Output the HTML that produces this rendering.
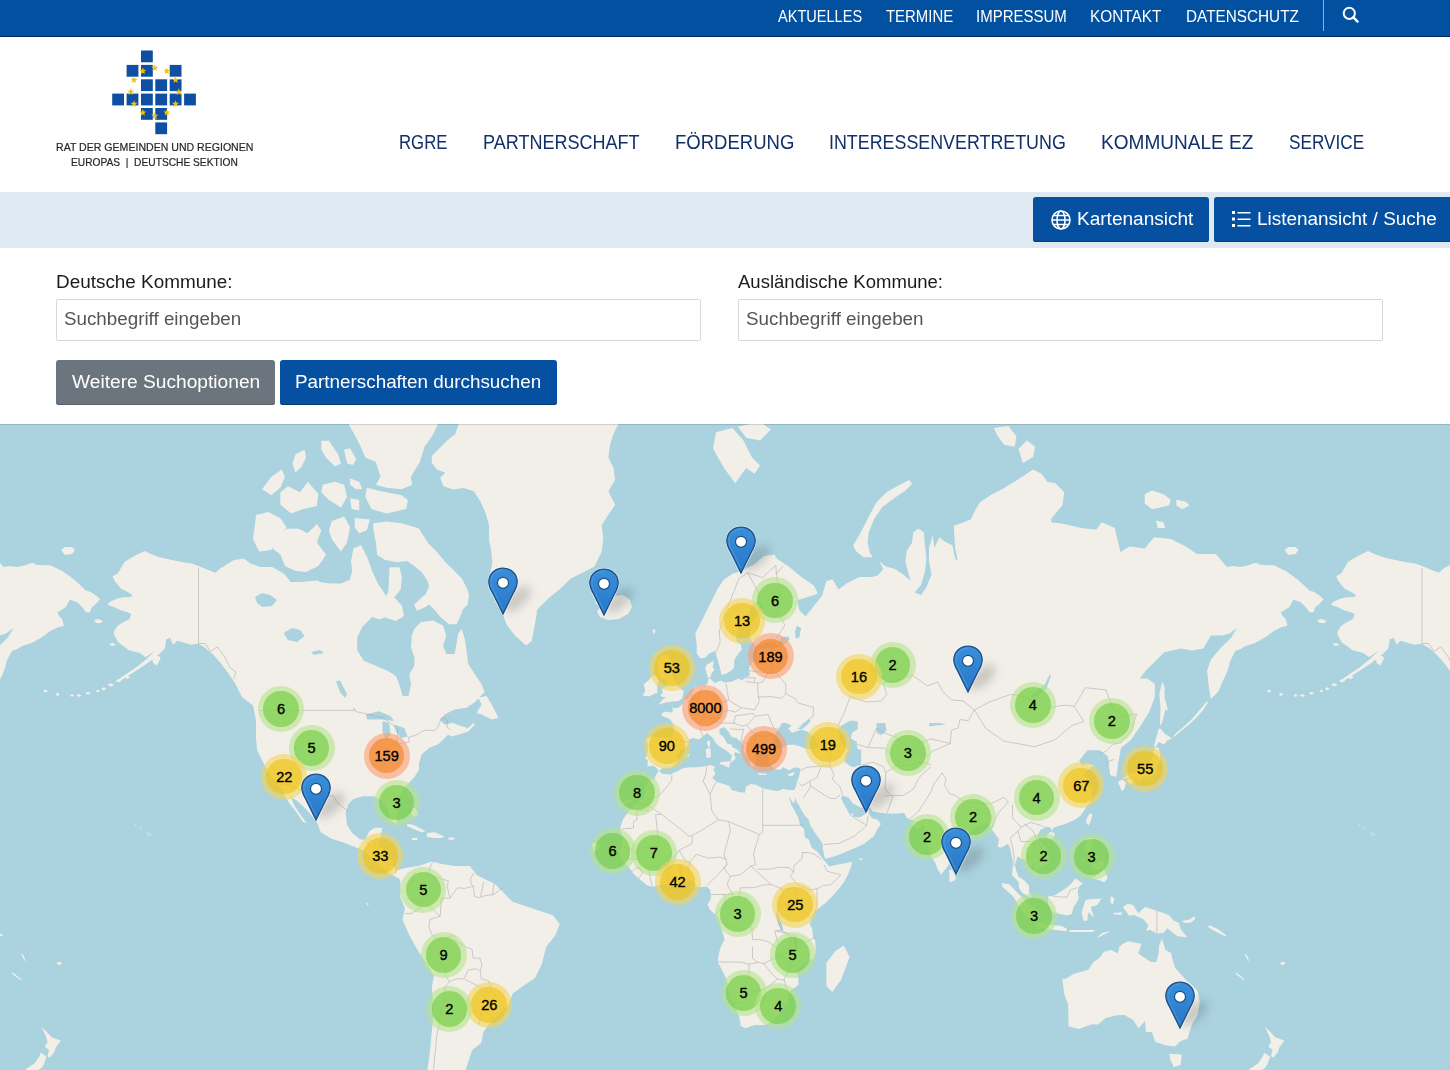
<!DOCTYPE html>
<html><head><meta charset="utf-8">
<style>
*{margin:0;padding:0;box-sizing:border-box}
html,body{width:1450px;height:1070px;overflow:hidden;background:#fff;font-family:"Liberation Sans",sans-serif}
.a{position:absolute;white-space:nowrap}
.t{position:absolute;white-space:nowrap;transform-origin:0 0}
#top{position:absolute;left:0;top:0;width:1450px;height:37px;background:#0151a0;border-bottom:1px solid #03245c}
.tn{color:#fff;font-size:15.6px}
.nav{color:#11306b;font-size:20.3px}
#band{position:absolute;left:0;top:192px;width:1450px;height:56px;background:#dee9f2}
.btn{position:absolute;background:#0650a2;border-radius:3px;box-shadow:inset 0 -1px 0 #0a3c78}
.bt{color:#fff;font-size:18.6px}
.lbl{color:#1b1b1b;font-size:18.3px}
.inp{position:absolute;border:1px solid #d5d8dc;background:#fff;border-radius:2px}
.ph{color:#51565c;font-size:17.6px}
#map{position:absolute;left:0;top:424px;width:1450px;height:646px;overflow:hidden}
.cl{position:absolute;width:46px;height:46px;border-radius:23px}
.cl div{position:absolute;left:5.2px;top:5.2px;width:35.6px;height:35.6px;border-radius:17.8px;font-size:14.6px;line-height:36px;-webkit-text-stroke:0.35px #000;text-align:center;color:#000;font-family:"Liberation Sans",sans-serif}
.pin{position:absolute}
.sh{position:absolute;width:34px;height:16px;border-radius:50%;background:rgba(40,40,40,0.2);filter:blur(5px);transform:rotate(-42deg)}
</style></head><body>
<div id="top"></div>
<div id="top"></div>
<span class="t tn" id="n1" style="left:778.0px;top:6.9px;font-size:16.06px;transform:scaleX(0.9065)">AKTUELLES</span>
<span class="t tn" id="n2" style="left:886.0px;top:6.9px;font-size:16.06px;transform:scaleX(0.9296)">TERMINE</span>
<span class="t tn" id="n3" style="left:976.1px;top:6.9px;font-size:16.06px;transform:scaleX(0.9343)">IMPRESSUM</span>
<span class="t tn" id="n4" style="left:1090.0px;top:6.9px;font-size:16.06px;transform:scaleX(0.9578)">KONTAKT</span>
<span class="t tn" id="n5" style="left:1186.0px;top:6.9px;font-size:16.06px;transform:scaleX(0.9542)">DATENSCHUTZ</span>
<div class="a" style="left:1323px;top:0;width:1px;height:31px;background:#8fb0d6"></div>
<svg class="a" style="left:1341px;top:5px" width="20" height="20" viewBox="0 0 20 20"><circle cx="8.3" cy="8.3" r="5.6" fill="none" stroke="#fff" stroke-width="2"/><path d="M12.4 12.4 L16.6 16.6" stroke="#fff" stroke-width="2.4" stroke-linecap="round"/></svg>
<!-- logo -->
<svg class="a" style="left:0;top:0" width="300" height="190" viewBox="0 0 300 190">
<g fill="#0e4ea3">
<rect x="141.0" y="50.5" width="11.8" height="11.8"/>
<rect x="126.6" y="64.9" width="11.8" height="11.8"/>
<rect x="141.0" y="64.9" width="11.8" height="11.8"/>
<rect x="169.7" y="64.9" width="11.8" height="11.8"/>
<rect x="141.0" y="79.3" width="11.8" height="11.8"/>
<rect x="155.3" y="79.3" width="11.8" height="11.8"/>
<rect x="169.7" y="79.3" width="11.8" height="11.8"/>
<rect x="112.2" y="93.6" width="11.8" height="11.8"/>
<rect x="126.6" y="93.6" width="11.8" height="11.8"/>
<rect x="141.0" y="93.6" width="11.8" height="11.8"/>
<rect x="155.3" y="93.6" width="11.8" height="11.8"/>
<rect x="169.7" y="93.6" width="11.8" height="11.8"/>
<rect x="184.1" y="93.6" width="11.8" height="11.8"/>
<rect x="141.0" y="108.0" width="11.8" height="11.8"/>
<rect x="155.3" y="108.0" width="11.8" height="11.8"/>
<rect x="155.3" y="122.4" width="11.8" height="11.8"/>
</g>
<g fill="#f3c300">
<polygon points="154.80,64.20 155.71,66.65 158.32,66.76 156.27,68.38 156.97,70.89 154.80,69.45 152.63,70.89 153.33,68.38 151.28,66.76 153.89,66.65"/>
<polygon points="166.80,67.42 167.71,69.86 170.32,69.97 168.27,71.59 168.97,74.11 166.80,72.67 164.63,74.11 165.33,71.59 163.28,69.97 165.89,69.86"/>
<polygon points="175.58,76.20 176.50,78.65 179.10,78.76 177.06,80.38 177.76,82.89 175.58,81.45 173.41,82.89 174.11,80.38 172.07,78.76 174.67,78.65"/>
<polygon points="178.80,88.20 179.71,90.65 182.32,90.76 180.27,92.38 180.97,94.89 178.80,93.45 176.63,94.89 177.33,92.38 175.28,90.76 177.89,90.65"/>
<polygon points="175.58,100.20 176.50,102.65 179.10,102.76 177.06,104.38 177.76,106.89 175.58,105.45 173.41,106.89 174.11,104.38 172.07,102.76 174.67,102.65"/>
<polygon points="166.80,108.98 167.71,111.43 170.32,111.54 168.27,113.16 168.97,115.68 166.80,114.23 164.63,115.68 165.33,113.16 163.28,111.54 165.89,111.43"/>
<polygon points="154.80,112.20 155.71,114.65 158.32,114.76 156.27,116.38 156.97,118.89 154.80,117.45 152.63,118.89 153.33,116.38 151.28,114.76 153.89,114.65"/>
<polygon points="142.80,108.98 143.71,111.43 146.32,111.54 144.27,113.16 144.97,115.68 142.80,114.23 140.63,115.68 141.33,113.16 139.28,111.54 141.89,111.43"/>
<polygon points="134.02,100.20 134.93,102.65 137.53,102.76 135.49,104.38 136.19,106.89 134.02,105.45 131.84,106.89 132.54,104.38 130.50,102.76 133.10,102.65"/>
<polygon points="130.80,88.20 131.71,90.65 134.32,90.76 132.27,92.38 132.97,94.89 130.80,93.45 128.63,94.89 129.33,92.38 127.28,90.76 129.89,90.65"/>
<polygon points="134.02,76.20 134.93,78.65 137.53,78.76 135.49,80.38 136.19,82.89 134.02,81.45 131.84,82.89 132.54,80.38 130.50,78.76 133.10,78.65"/>
<polygon points="142.80,67.42 143.71,69.86 146.32,69.97 144.27,71.59 144.97,74.11 142.80,72.67 140.63,74.11 141.33,71.59 139.28,69.97 141.89,69.86"/>
</g>
</svg>
<span class="t" id="l1" style="left:55.6px;top:140.5px;color:#262626;-webkit-text-stroke:0.2px #262626;font-size:11.17px;transform:scaleX(0.9470)">RAT DER GEMEINDEN UND REGIONEN</span>
<span class="t" id="l2" style="left:70.6px;top:155.9px;color:#262626;-webkit-text-stroke:0.2px #262626;font-size:11.31px;transform:scaleX(0.9030)">EUROPAS &nbsp;|&nbsp; DEUTSCHE SEKTION</span>
<span class="t nav" id="m1" style="left:398.6px;top:129.5px;font-size:20.67px;transform:scaleX(0.8115)">RGRE</span>
<span class="t nav" id="m2" style="left:483.1px;top:129.5px;font-size:20.67px;transform:scaleX(0.8726)">PARTNERSCHAFT</span>
<span class="t nav" id="m3" style="left:675.1px;top:131.4px;font-size:20.30px;transform:scaleX(0.9133)">FÖRDERUNG</span>
<span class="t nav" id="m4" style="left:829.1px;top:129.5px;font-size:20.67px;transform:scaleX(0.8644)">INTERESSENVERTRETUNG</span>
<span class="t nav" id="m5" style="left:1100.7px;top:129.5px;font-size:20.67px;transform:scaleX(0.9223)">KOMMUNALE EZ</span>
<span class="t nav" id="m6" style="left:1289.2px;top:129.5px;font-size:20.67px;transform:scaleX(0.8331)">SERVICE</span>
<div id="band"></div>
<div class="btn" style="left:1033px;top:197px;width:176px;height:45px"></div>
<div class="btn" style="left:1214px;top:197px;width:250px;height:45px"></div>
<svg class="a" style="left:1050px;top:209px" width="22" height="22" viewBox="0 0 22 22"><g fill="none" stroke="#fff" stroke-width="1.6"><circle cx="11" cy="11" r="9"/><ellipse cx="11" cy="11" rx="4" ry="9"/><path d="M2 11H20M3.5 6.5H18.5M3.5 15.5H18.5"/></g></svg>
<span class="t bt" id="b1" style="left:1076.6px;top:208.2px;font-size:18.99px;transform:scaleX(1.0026)">Kartenansicht</span>
<svg class="a" style="left:1231px;top:209px" width="22" height="22" viewBox="0 0 22 22"><g fill="#fff"><rect x="1" y="2" width="3" height="3"/><rect x="1" y="8.5" width="3" height="3"/><rect x="1" y="15" width="3" height="3"/><rect x="6.5" y="3" width="13" height="1.5"/><rect x="6.5" y="9.5" width="13" height="1.5"/><rect x="6.5" y="16" width="13" height="1.5"/></g></svg>
<span class="t bt" id="b2" style="left:1257.4px;top:208.2px;font-size:18.99px;transform:scaleX(0.9960)">Listenansicht / Suche</span>
<span class="t lbl" id="f1" style="left:55.7px;top:270.8px;font-size:18.58px;transform:scaleX(1.0174)">Deutsche Kommune:</span>
<span class="t lbl" id="f2" style="left:738.3px;top:270.8px;font-size:18.58px;transform:scaleX(0.9974)">Ausländische Kommune:</span>
<div class="inp" style="left:56px;top:298.5px;width:645px;height:42.5px"></div>
<div class="inp" style="left:737.5px;top:298.5px;width:645px;height:42.5px"></div>
<span class="t ph" id="p1" style="left:64.3px;top:309.2px;font-size:17.74px;transform:scaleX(1.0594)">Suchbegriff eingeben</span>
<span class="t ph" id="p2" style="left:745.5px;top:309.2px;font-size:17.74px;transform:scaleX(1.0612)">Suchbegriff eingeben</span>
<div class="btn" style="left:56px;top:360px;width:219px;height:45px;background:#6c757d;box-shadow:inset 0 -1px 0 #5a6168"></div>
<div class="btn" style="left:280px;top:360px;width:277px;height:45px"></div>
<span class="t bt" id="g1" style="left:72.1px;top:371.4px;font-size:19.27px;transform:scaleX(0.9947)">Weitere Suchoptionen</span>
<span class="t bt" id="g2" style="left:295.4px;top:371.4px;font-size:19.27px;transform:scaleX(0.9783)">Partnerschaften durchsuchen</span>
<div id="map"><svg class="a" style="left:0;top:0" width="1450" height="646" viewBox="0 0 1450 646">
<rect width="1450" height="646" fill="#aad3df"/>
<defs><g id="w"><path d="M94.0 196.0 98.0 195.0 103.0 197.0 101.0 199.0 96.0 199.0ZM109.0 220.0 113.0 219.0 116.0 221.0 112.0 222.0ZM107.6 180.8 109.3 178.2 116.0 174.9 122.8 173.2 129.5 173.2 132.9 171.5 127.8 168.1 121.1 164.8 114.4 156.4 112.7 152.2 117.7 149.6 124.5 137.9 132.9 132.8 144.6 126.9 151.4 130.3 158.1 132.8 168.2 135.3 181.6 137.9 191.7 139.5 198.5 142.1 206.9 145.4 215.3 148.8 220.2 144.6 233.6 136.2 243.7 134.5 250.5 139.6 260.5 143.0 272.3 143.0 284.1 149.7 290.8 158.1 300.9 158.1 317.7 156.4 320.0 158.1 329.9 159.4 341.1 159.4 349.8 155.7 352.3 147.0 351.0 137.0 353.5 124.6 361.0 120.9 367.2 133.3 372.1 147.0 378.3 160.6 382.1 165.6 385.8 171.8 388.3 168.1 389.5 143.2 399.4 143.2 401.9 153.2 400.7 165.6 394.5 173.0 392.0 180.5 387.0 185.4 385.8 192.9 379.6 195.4 372.1 192.9 367.2 197.9 362.2 203.1 357.2 213.2 357.2 226.6 363.9 236.7 375.7 241.8 387.5 246.8 395.9 251.9 399.2 260.3 402.6 272.0 408.5 272.0 411.0 260.3 409.3 250.2 414.4 241.8 414.4 233.4 411.0 223.3 411.8 211.5 414.4 204.8 421.1 198.0 432.9 196.4 443.0 201.4 446.3 211.5 443.0 221.6 446.3 230.0 454.7 230.0 456.4 219.9 458.1 209.8 461.5 204.8 464.8 214.9 466.5 226.6 468.2 240.1 474.9 250.2 481.6 260.3 484.5 268.0 475.0 278.0 466.5 283.8 454.7 285.5 444.6 290.5 439.6 295.6 444.6 300.6 453.0 299.0 461.5 302.3 468.2 304.0 473.2 299.0 474.9 300.6 468.2 307.4 458.1 310.7 451.4 312.4 448.0 310.7 443.0 315.8 438.6 319.9 429.4 323.8 421.6 330.4 419.0 339.5 419.0 346.1 413.7 353.9 408.5 359.2 403.3 365.7 399.3 372.3 398.0 378.8 397.5 388.0 396.7 399.7 391.5 397.1 387.6 386.6 382.3 376.2 373.2 372.3 362.7 372.3 353.5 374.9 348.3 380.1 345.7 389.3 347.0 401.0 352.2 408.9 360.1 415.4 365.3 415.4 369.2 407.6 374.5 403.7 382.3 403.7 381.0 410.2 378.0 421.0 385.0 429.0 392.0 438.0 395.4 445.5 399.3 449.4 403.3 452.0 398.0 454.0 392.0 451.0 386.0 447.0 378.0 440.0 370.0 432.0 364.0 426.7 353.7 422.6 343.4 418.5 331.1 414.4 320.8 408.2 316.7 398.0 312.0 392.0 305.0 384.0 296.0 376.0 291.0 373.0 294.0 381.0 300.0 390.0 305.0 397.0 307.0 399.0 303.0 398.0 297.0 389.0 290.0 380.0 284.0 371.0 281.7 365.0 269.4 350.6 263.2 338.3 257.0 325.9 256.0 313.6 256.0 297.1 253.1 281.5 242.1 273.2 235.2 259.4 229.7 251.2 221.4 240.1 213.1 230.5 204.8 223.6 197.9 219.4 191.0 220.8 177.2 216.7 173.1 220.8 170.3 213.9 166.2 215.3 164.8 224.5 159.3 230.0 148.3 238.8 134.5 247.8 121.0 256.5 118.5 255.5 124.0 251.5 136.0 243.5 146.5 235.0 155.5 226.5 145.5 233.2 140.0 229.1 129.0 226.3 117.9 218.1 113.8 209.8 114.4 206.8 117.7 201.8 122.8 198.4 129.5 195.0 131.2 190.0 127.8 188.3 121.1 186.6 114.4 183.3ZM478.3 273.7 486.7 272.0 493.4 283.8 498.5 293.9 491.7 295.6 481.6 290.5 476.6 288.9 481.6 280.5ZM407.2 399.7 413.7 401.0 421.6 405.0 425.5 407.6 421.6 408.2 413.7 405.0 407.2 402.3ZM426.8 408.9 434.7 408.2 443.8 412.2 442.5 414.1 433.3 414.1 426.8 412.8ZM412.0 414.0 417.0 414.0 417.6 416.0 412.0 416.0ZM448.4 413.5 454.3 413.5 454.3 415.7 448.4 415.7ZM395.9 446.4 405.0 444.0 418.3 441.9 431.8 437.4 440.8 439.7 454.2 441.9 469.9 441.9 476.7 450.9 485.6 455.4 494.6 459.8 503.6 468.8 512.6 477.8 526.0 482.3 539.5 486.8 553.0 491.3 559.7 500.2 555.2 511.5 546.2 522.7 541.7 540.6 535.0 554.1 521.5 563.1 512.6 569.8 508.1 581.0 499.1 590.0 490.1 599.0 483.4 607.9 481.2 619.1 472.2 625.9 465.5 646.0 465.0 676.0 427.0 676.0 427.3 646.0 429.6 630.4 431.8 607.9 434.0 585.5 431.8 563.1 434.0 551.8 427.3 540.6 418.3 527.2 409.4 511.5 402.6 495.7 404.9 484.5 400.4 473.3 400.4 457.6ZM373.2 99.2 386.7 97.5 401.8 99.2 418.6 104.3 428.4 119.4 436.8 127.8 445.2 137.9 453.6 146.3 462.0 154.7 467.1 164.8 469.0 170.5 467.7 180.5 462.8 185.4 459.0 195.4 456.5 200.3 449.1 200.3 440.4 192.9 434.2 185.4 429.2 180.5 423.0 184.2 416.8 186.7 414.3 180.5 419.3 175.5 425.5 170.5 429.2 161.9 426.8 155.7 421.8 148.2 414.3 142.0 406.9 137.0 397.0 138.3 384.5 135.8 377.1 130.8 375.9 118.4 373.4 106.0ZM385.0 176.0 395.0 174.0 402.0 182.0 404.0 192.0 396.0 197.0 386.0 194.0 382.0 184.0ZM458.7 -4.0 458.7 0.0 455.3 10.1 446.9 16.8 438.5 25.2 431.8 32.0 431.8 38.7 436.8 45.4 445.2 48.8 440.2 53.8 443.5 62.2 453.6 65.6 463.7 63.9 473.8 67.3 480.5 77.4 485.6 89.1 489.0 100.9 489.1 116.0 491.3 127.2 492.4 138.4 490.2 149.6 493.0 166.0 495.8 178.8 502.5 190.0 507.0 201.2 514.8 211.3 526.0 221.4 531.7 216.9 535.0 200.1 537.3 185.5 548.5 174.3 559.7 165.3 570.8 154.5 580.9 149.5 594.4 142.7 598.3 134.5 601.6 127.8 603.3 114.4 601.6 100.9 608.4 90.8 615.1 80.7 608.4 67.3 615.1 55.5 613.4 43.7 608.4 33.6 610.1 20.2 613.4 10.1 618.5 0.0 618.5 -4.0ZM595.0 179.0 600.0 173.0 609.0 174.0 615.0 172.0 623.0 171.0 630.0 176.0 632.0 183.0 628.0 190.0 619.0 195.0 608.0 196.0 600.0 193.0 597.0 187.0 601.0 183.0ZM152.4 233.0 157.0 230.5 160.7 234.0 157.0 241.5 153.0 239.0ZM348.6 -4.0 348.6 0.0 356.2 13.7 360.8 22.8 365.3 33.4 375.9 37.9 380.5 53.1 375.9 60.7 386.6 63.7 401.7 65.2 412.3 60.7 410.8 53.1 419.9 37.9 424.5 22.8 432.1 12.1 438.1 0.0 438.1 -4.0ZM366.8 63.7 379.0 66.8 401.7 71.3 407.8 75.9 406.3 85.0 386.6 89.5 371.4 85.0 365.3 72.8ZM344.1 25.8 350.1 24.3 356.2 34.9 353.2 41.0 347.1 39.4ZM321.3 16.7 328.9 16.7 338.0 30.3 341.0 39.4 335.0 42.5 325.9 33.4 321.3 25.8ZM295.5 30.3 304.6 25.8 306.1 33.4 301.6 42.5 295.5 48.5 292.5 39.4ZM262.1 65.2 271.2 53.1 281.9 45.5 284.9 53.1 280.3 63.7 271.2 71.3ZM280.3 68.3 287.9 62.2 300.1 68.3 307.7 57.7 318.3 69.8 316.8 81.9 303.1 85.0 291.0 89.5 280.3 80.4ZM322.8 60.7 335.0 57.7 344.1 60.7 347.1 72.8 341.0 83.4 328.9 75.9 321.3 68.3ZM350.1 54.6 359.2 57.7 362.3 65.2 356.2 65.2 350.1 60.7ZM350.1 74.3 359.2 75.9 359.2 86.5 351.7 85.0ZM256.1 91.0 268.2 88.0 280.3 94.1 286.4 103.2 280.3 113.8 271.2 125.9 259.1 127.4 253.0 115.3 254.6 103.2ZM277.3 115.3 286.4 104.7 298.5 104.7 307.7 109.2 316.8 100.1 321.3 106.2 316.8 118.3 325.9 130.5 322.8 136.0 318.0 142.0 306.0 148.0 295.5 147.0 285.0 142.0 280.3 130.5 272.8 124.4ZM331.9 97.1 344.1 92.6 350.1 103.2 347.1 118.3 341.0 127.4 331.9 115.3 328.9 106.2ZM354.7 94.1 369.9 95.6 366.8 106.2 359.2 109.2 354.7 103.2ZM658.7 346.7 655.9 343.3 652.6 341.6 647.5 342.5 647.8 336.0 645.4 334.7 647.5 328.6 648.1 322.7 647.5 318.1 646.1 315.4 650.5 312.6 657.3 313.0 664.8 313.5 671.6 314.0 673.6 308.3 673.6 300.5 670.2 295.6 667.5 294.1 662.7 292.6 661.4 289.5 665.8 287.5 670.9 288.5 672.9 288.5 672.3 283.3 674.0 284.3 678.4 283.8 683.1 279.6 683.8 275.9 688.6 274.2 691.3 270.9 693.7 265.9 694.7 263.1 699.8 262.0 704.9 261.4 707.3 259.7 708.3 256.2 706.9 250.3 705.2 244.2 706.9 240.5 713.7 236.7 712.7 243.6 714.7 245.4 711.7 249.1 710.3 253.2 711.7 256.2 715.1 259.1 720.2 256.8 725.3 258.5 732.1 257.4 738.9 254.4 741.3 256.8 745.3 253.8 749.8 251.5 749.1 244.2 751.1 239.2 754.5 236.7 757.6 240.5 760.6 239.8 759.9 232.8 757.6 230.9 757.2 226.9 761.6 224.9 766.1 224.3 772.9 224.9 780.3 222.2 776.3 220.2 771.2 218.1 764.4 219.5 755.9 222.2 750.8 216.0 750.1 207.5 750.8 198.7 755.9 193.3 761.0 186.3 764.0 183.8 761.0 178.1 755.9 178.1 750.8 182.2 749.1 188.6 745.7 195.6 740.6 200.2 737.2 205.3 736.5 211.1 736.2 216.7 740.6 220.2 741.9 225.6 738.9 228.9 734.5 235.4 733.8 244.2 731.4 246.6 726.3 249.7 721.5 250.9 720.5 246.0 718.1 237.3 715.8 228.9 713.4 226.3 712.7 228.3 710.0 228.9 704.9 234.1 700.1 234.1 696.7 229.6 696.8 221.6 695.3 209.6 699.8 200.6 705.8 188.7 711.7 176.7 717.7 164.8 723.7 155.8 732.7 149.8 741.6 146.8 753.6 140.8 764.1 131.9 774.5 130.4 776.6 134.5 789.0 142.8 801.4 153.1 813.8 161.4 817.9 169.7 805.5 173.8 797.2 175.9 799.3 186.2 805.5 192.4 813.8 182.1 822.1 171.7 826.2 157.3 832.4 155.2 838.6 165.5 846.9 159.3 859.3 153.1 871.7 153.1 877.9 151.5 883.2 145.0 879.3 137.1 885.8 142.4 895.0 145.0 902.8 150.2 910.7 156.7 908.0 147.6 905.4 137.1 906.7 126.7 912.0 118.8 913.3 108.3 918.5 104.4 923.7 108.3 925.0 121.4 926.4 134.5 925.0 147.6 921.1 160.7 914.6 168.5 921.1 171.1 926.4 163.3 931.6 150.2 929.0 137.1 929.0 124.0 932.9 111.0 934.2 124.0 939.4 113.6 944.7 117.5 952.5 121.4 955.1 134.5 957.8 137.1 955.1 124.0 953.8 101.8 964.3 97.9 970.8 95.3 977.4 82.2 980.0 78.2 991.7 70.4 1004.2 64.1 1020.7 53.8 1033.1 45.5 1041.4 49.7 1047.6 57.9 1055.0 59.0 1064.3 68.3 1062.4 81.4 1051.2 94.5 1051.2 98.2 1064.3 100.1 1081.1 103.9 1096.1 105.7 1101.7 98.2 1114.8 103.9 1120.4 128.1 1129.7 122.5 1144.7 124.4 1154.0 113.2 1170.8 115.1 1185.8 122.5 1197.0 130.0 1215.7 130.0 1226.9 142.9 1233.6 142.0 1240.3 142.9 1248.7 141.2 1252.9 139.5 1257.1 138.7 1258.8 140.4 1265.5 141.2 1274.0 141.2 1279.0 143.7 1285.7 147.1 1290.8 150.5 1297.5 155.5 1304.2 161.4 1309.3 166.5 1314.3 168.1 1319.4 171.5 1323.6 174.9 1319.4 179.9 1315.2 183.3 1313.5 188.3 1309.3 188.3 1305.9 183.3 1300.9 178.2 1295.8 176.5 1293.3 175.7 1291.6 179.1 1289.1 183.3 1284.0 186.6 1280.7 188.3 1282.4 191.7 1285.7 195.0 1287.4 201.8 1280.7 203.5 1274.0 206.8 1267.2 211.9 1258.8 216.9 1253.8 219.4 1245.4 222.0 1240.3 225.3 1235.3 227.0 1230.2 237.1 1228.5 243.8 1226.0 250.5 1223.5 255.6 1218.3 267.6 1210.8 275.1 1209.0 263.9 1207.1 247.0 1210.8 235.8 1220.2 224.6 1231.4 213.4 1237.0 204.0 1229.5 209.6 1222.1 211.5 1210.8 211.5 1203.4 224.6 1192.1 226.5 1180.9 224.6 1164.1 228.3 1154.8 237.7 1145.4 247.0 1139.8 254.5 1147.3 254.5 1154.8 260.1 1154.8 273.2 1149.2 288.1 1139.8 303.1 1130.5 316.2 1121.1 323.7 1118.3 338.6 1116.3 353.0 1110.1 351.0 1108.0 332.4 1099.8 326.3 1087.5 326.3 1079.2 336.6 1082.1 341.6 1087.9 339.9 1094.0 341.2 1087.2 346.7 1082.8 350.9 1086.6 353.8 1088.3 360.7 1092.0 364.3 1092.0 367.9 1090.3 369.9 1092.3 371.8 1090.6 377.7 1086.6 381.9 1084.2 386.4 1080.4 391.7 1075.3 395.4 1068.5 398.4 1063.4 400.6 1058.3 402.1 1052.9 403.9 1051.9 407.5 1050.5 403.2 1046.4 402.8 1040.3 406.1 1037.3 412.2 1040.0 417.6 1045.4 422.5 1048.8 430.6 1048.8 438.3 1044.8 440.7 1040.3 442.5 1034.6 448.7 1033.9 442.8 1029.5 442.1 1025.4 436.2 1020.6 434.5 1017.9 432.0 1014.8 440.7 1016.2 446.6 1018.9 453.5 1022.0 454.5 1025.0 457.2 1029.1 461.7 1029.1 468.5 1031.8 473.2 1029.5 473.6 1022.0 468.5 1018.9 463.7 1018.6 457.9 1011.8 450.7 1012.8 443.8 1012.5 435.2 1009.7 422.9 1008.0 419.7 1001.6 423.6 997.8 422.9 998.9 415.1 995.5 410.4 991.1 404.6 989.7 399.5 985.3 401.3 980.2 402.4 973.4 403.2 972.7 406.8 966.6 410.8 957.4 419.4 950.6 424.7 950.3 432.4 948.9 440.4 947.2 442.8 943.5 447.6 941.1 450.4 937.7 445.6 935.3 438.7 931.9 433.8 929.2 426.4 926.5 417.6 925.1 412.2 925.1 405.0 924.4 400.6 916.6 405.0 912.2 400.2 916.3 398.0 910.2 395.4 906.8 393.9 904.4 389.1 896.9 389.5 887.1 389.5 879.6 388.7 872.4 387.2 869.7 382.3 863.9 384.5 859.5 383.0 852.7 379.2 848.7 373.8 842.9 371.4 840.8 373.4 843.9 380.3 846.6 384.5 848.3 388.3 850.3 391.0 853.1 389.1 853.1 392.8 859.5 393.6 864.6 390.6 868.7 385.7 869.0 390.6 872.1 394.3 877.5 395.8 880.9 399.9 876.5 406.8 873.8 412.2 870.1 415.1 864.6 419.4 855.1 424.0 845.9 427.8 840.8 429.9 833.0 432.7 825.5 434.8 824.5 432.4 822.8 424.7 822.8 420.1 818.7 414.0 813.6 406.8 810.6 402.1 808.5 395.4 805.1 391.7 802.1 387.6 798.4 380.0 796.7 378.4 795.3 373.0 794.3 379.6 791.9 377.3 788.5 371.4 791.6 381.5 794.6 386.4 798.4 393.9 800.1 401.3 804.1 405.0 804.8 413.3 808.9 415.8 811.6 423.6 817.7 428.2 821.8 433.4 824.9 437.3 829.3 442.5 835.7 441.1 842.5 439.7 847.6 438.7 852.0 437.6 851.4 441.8 850.7 443.8 848.0 450.4 844.2 457.6 840.5 462.7 834.0 470.5 825.5 479.0 819.4 483.8 814.3 487.5 811.3 494.0 809.6 499.8 812.3 505.3 813.0 512.2 815.3 517.3 815.7 527.8 813.6 534.2 803.4 539.5 796.7 547.4 798.4 554.7 798.4 560.9 789.9 566.9 788.5 571.5 787.8 579.1 784.1 583.0 780.3 588.9 774.2 595.3 767.8 599.8 764.4 601.0 754.2 601.0 745.7 604.3 740.6 601.8 740.2 596.9 738.5 590.9 733.8 579.5 729.4 573.4 727.0 556.5 723.6 549.2 717.8 537.7 718.5 531.3 720.5 523.6 724.6 515.6 722.6 508.7 719.5 498.4 718.1 493.3 710.0 485.8 707.6 480.7 711.0 474.6 710.3 466.1 706.9 462.7 701.5 463.0 697.4 463.4 693.0 456.5 686.2 456.5 681.1 457.9 672.6 461.0 665.8 460.6 660.7 460.6 652.2 463.0 647.1 461.3 638.6 454.5 633.5 449.7 630.8 445.6 626.7 441.1 620.9 435.5 620.6 431.7 618.2 427.5 621.6 422.9 623.0 415.1 621.6 410.4 619.6 405.0 623.3 394.7 627.4 389.1 631.8 384.2 636.9 378.4 643.0 374.2 645.1 369.5 644.4 363.9 648.8 357.9 654.6 354.6 657.3 348.4 659.3 347.1 662.4 350.0 670.2 350.5 677.7 347.1 682.8 344.2 689.6 343.3 696.4 343.3 704.2 342.5 711.0 341.2 715.1 342.5 713.4 345.4 715.4 350.0 712.4 353.8 716.8 358.3 721.9 359.5 729.7 361.9 731.4 365.9 738.9 367.9 745.0 368.7 746.0 362.7 750.8 359.9 755.9 360.7 762.7 364.3 771.2 366.3 778.0 367.1 783.1 364.7 787.5 365.9 794.3 365.9 796.0 362.3 796.7 358.7 798.7 353.4 799.7 348.8 800.7 344.2 798.4 344.2 795.0 343.3 789.2 346.3 783.1 343.3 780.7 345.4 777.3 345.4 772.9 343.7 770.5 341.2 767.8 336.9 768.8 332.5 766.4 329.4 768.1 327.7 766.1 325.9 761.0 325.4 758.2 328.1 754.8 327.2 754.5 331.7 756.5 336.9 755.2 340.3 751.4 343.3 749.8 339.1 750.1 336.5 746.4 331.2 743.6 327.2 744.0 321.8 740.6 318.1 736.5 314.0 731.7 313.0 728.7 308.3 726.3 304.9 723.9 303.0 719.5 304.9 719.5 309.7 723.9 313.5 727.0 319.5 732.4 320.9 731.7 322.7 737.2 325.4 740.6 329.0 738.5 329.4 735.5 327.7 733.8 330.8 735.8 333.8 733.8 336.5 731.1 338.6 731.1 335.6 732.1 331.7 728.7 328.6 725.6 325.9 718.5 321.8 715.1 318.1 712.4 313.5 707.3 309.2 703.2 312.1 698.8 315.4 693.0 314.0 688.6 315.8 688.6 320.9 684.5 324.1 680.4 326.3 676.7 331.7 678.4 335.2 675.3 339.9 670.6 343.7 662.7 343.7 659.7 346.3ZM658.3 280.7 667.5 278.0 678.4 276.9 682.5 274.2 683.5 267.1 678.4 262.5 673.6 255.6 672.3 249.7 668.9 245.4 671.6 237.3 667.5 230.9 660.7 230.9 656.6 237.9 658.7 247.2 660.7 254.4 666.8 254.4 667.5 262.5 662.1 263.7 662.7 269.3 660.0 272.0 666.5 273.7 663.4 274.8ZM657.3 269.3 657.3 262.0 659.0 256.2 656.6 252.1 652.2 251.5 648.8 256.2 643.7 260.2 645.4 267.1 642.7 271.5 648.8 272.6 655.6 269.3ZM715.9 8.3 732.4 4.1 743.4 16.6 751.7 33.1 760.0 41.4 754.5 49.7 746.2 44.1 735.2 59.3 724.1 44.1 713.1 24.8ZM737.9 2.8 760.0 -2.0 771.0 5.5 760.0 16.6 746.2 13.8ZM853.1 121.4 860.9 108.3 868.8 92.6 876.6 78.2 887.1 67.8 898.9 61.2 909.3 56.0 912.0 59.9 905.4 66.5 892.3 75.6 881.9 83.5 874.0 95.3 868.8 108.3 867.5 118.8 870.1 129.3 872.7 133.2 863.6 133.2 855.7 126.7ZM993.8 4.1 1008.3 2.1 1016.6 12.4 1014.5 22.8 1004.2 20.7 997.9 12.4ZM1018.6 24.8 1026.9 16.6 1035.2 22.8 1033.1 33.1 1022.8 39.3ZM1144.7 70.2 1152.1 66.5 1163.4 70.2 1170.8 75.8 1169.0 81.4 1152.1 85.2 1144.7 79.6ZM1176.4 75.8 1185.8 77.7 1189.5 81.4 1182.1 85.2 1176.4 81.4ZM1155.9 96.4 1163.4 98.2 1165.2 103.9 1157.8 103.9ZM1284.5 126.0 1288.5 123.0 1295.5 123.0 1298.5 126.0 1295.5 130.0 1288.5 131.0ZM1160.0 301.5 1162.0 299.1 1165.4 285.4 1168.1 286.4 1164.4 273.1 1164.7 263.7 1162.3 257.4 1159.3 270.4 1160.6 283.8 1160.0 296.6ZM1153.5 322.7 1155.2 317.7 1158.6 304.9 1160.3 304.4 1165.4 310.2 1172.2 314.4 1167.1 316.3 1164.4 320.4 1158.6 318.1 1156.6 321.8ZM1122.6 355.0 1129.7 348.8 1137.2 348.0 1139.9 343.3 1143.3 342.5 1148.4 339.1 1153.2 331.7 1153.5 327.2 1154.5 323.6 1158.6 323.6 1160.0 329.4 1160.0 336.0 1156.9 342.5 1156.2 347.5 1152.8 351.3 1150.1 352.5 1143.3 352.5 1139.9 357.0 1136.9 354.2 1133.1 353.8 1128.0 354.2ZM1126.3 355.8 1131.4 353.8 1135.2 354.2 1134.8 357.9 1129.7 359.9ZM1118.8 357.0 1122.6 355.4 1126.0 359.1 1123.9 365.5 1121.6 367.1 1120.2 363.1 1118.2 359.1ZM1085.9 397.6 1087.9 392.1 1091.0 389.1 1092.3 391.0 1090.6 397.6 1088.3 401.7ZM1046.8 411.5 1049.8 408.2 1053.9 408.6 1054.9 410.4 1052.6 414.4 1048.1 414.7ZM949.2 457.6 949.6 452.4 948.9 446.6 951.3 445.2 954.0 449.0 956.0 454.2 953.7 456.9 950.6 457.9ZM1085.5 422.2 1087.6 414.0 1093.0 414.0 1092.3 419.4 1091.0 424.7 1094.0 429.2 1099.1 433.4 1097.4 434.8 1088.9 431.0 1087.6 428.2 1084.9 424.7ZM1092.3 437.6 1095.7 440.4 1100.8 435.2 1104.2 438.7 1102.5 443.8 1097.4 445.6 1094.0 445.6 1092.0 442.1ZM1092.3 454.2 1097.4 450.7 1104.2 444.9 1107.6 454.2 1104.2 458.3 1099.1 455.9 1092.3 454.5ZM1001.6 458.9 1009.1 460.3 1018.9 470.2 1029.8 480.7 1038.0 488.2 1037.6 497.7 1033.2 498.1 1025.7 491.9 1020.3 484.1 1012.8 471.9 1002.3 462.7ZM1035.2 501.2 1039.7 498.4 1046.4 499.8 1053.2 501.5 1060.0 501.5 1066.8 504.6 1066.5 507.3 1054.9 506.0 1044.8 504.6 1038.0 503.2ZM1068.5 506.0 1082.1 506.0 1092.3 506.0 1095.7 506.3 1092.3 508.0 1082.1 508.0 1070.2 508.0ZM1097.4 513.2 1102.5 508.7 1110.0 507.0 1105.9 509.7 1099.1 512.9ZM1050.2 471.2 1054.9 471.2 1061.7 467.1 1070.2 461.0 1075.3 454.5 1082.8 459.6 1078.7 463.0 1077.7 467.8 1078.7 474.6 1077.0 478.0 1073.6 483.1 1071.9 489.9 1066.8 491.6 1056.6 489.2 1052.2 487.9 1048.1 479.7 1048.1 472.9ZM1083.5 496.7 1087.2 496.7 1088.3 488.2 1094.0 493.3 1090.6 483.1 1097.4 481.1 1102.5 472.6 1100.8 474.6 1088.9 475.3 1085.5 476.3 1083.8 481.4 1081.5 488.2ZM1111.0 471.9 1114.4 474.6 1112.7 480.7 1110.3 478.0ZM1112.7 488.9 1122.2 488.2 1121.2 490.9 1113.7 490.2ZM1122.9 483.1 1128.0 479.7 1133.1 481.1 1138.2 489.2 1145.0 483.1 1156.9 486.8 1168.8 490.9 1173.9 496.7 1179.0 499.1 1180.7 505.3 1187.5 513.2 1177.3 512.2 1167.1 504.2 1163.7 508.7 1156.9 509.4 1150.1 506.0 1146.0 506.7 1148.4 501.2 1143.3 495.0 1133.8 490.9 1129.0 491.6 1126.3 487.5ZM1182.4 496.7 1189.2 495.7 1194.3 492.3 1195.3 495.0 1190.9 498.4 1184.1 499.1ZM1209.6 501.2 1218.1 505.3 1226.6 511.5 1224.9 512.2 1216.4 508.0 1207.9 502.9ZM1062.4 554.7 1064.1 569.6 1068.2 581.1 1068.5 599.0 1068.5 602.2 1078.7 605.1 1092.0 600.2 1097.8 600.6 1105.9 594.1 1116.1 591.3 1124.6 590.9 1133.1 596.1 1138.6 604.3 1145.0 596.9 1146.0 608.0 1151.8 608.0 1155.2 617.8 1165.4 621.3 1174.9 622.6 1180.7 616.9 1187.5 614.8 1191.9 600.2 1197.7 590.9 1199.7 578.0 1197.7 566.9 1190.9 560.2 1185.8 555.8 1174.9 543.8 1171.9 533.1 1171.2 528.9 1165.4 526.1 1162.0 514.6 1158.9 522.2 1158.6 529.6 1156.2 538.1 1151.1 538.1 1143.3 533.1 1138.2 529.6 1141.6 519.8 1136.5 519.1 1128.4 517.3 1122.9 519.8 1119.5 522.6 1117.8 529.2 1111.0 526.1 1104.2 527.8 1099.1 534.2 1093.0 538.4 1088.9 545.6 1078.7 548.5 1073.6 549.9 1065.8 554.7ZM1169.1 629.7 1181.7 630.6 1180.7 641.1 1173.9 643.0 1170.5 636.5ZM1264.6 602.6 1270.8 608.5 1275.5 613.5 1284.4 616.5 1279.3 623.5 1277.6 628.8 1273.1 633.7 1271.1 631.9 1272.5 625.7 1268.4 623.0 1271.1 617.8 1269.1 611.4ZM1264.3 628.8 1270.1 632.4 1267.4 640.2 1265.0 643.9 1259.5 647.2 1257.8 654.0 1253.1 657.4 1243.6 654.5 1244.6 650.6 1249.7 644.9 1258.2 639.2 1262.3 633.3ZM1280.3 538.4 1284.4 537.7 1284.7 540.9 1280.6 540.6ZM1235.1 548.1 1238.5 550.3 1245.3 555.8 1243.6 555.8 1236.1 550.3ZM1244.6 529.6 1247.0 531.3 1249.7 538.4 1245.9 533.1ZM843.8 521.5 849.6 533.1 840.9 556.3 832.2 567.9 826.4 562.1 826.4 538.9 835.1 527.3ZM787.5 350.9 789.9 349.2 795.3 348.0 793.3 351.3 789.9 352.5ZM757.6 349.6 767.1 349.6 766.1 350.9 759.3 350.9ZM719.8 338.2 730.7 336.9 729.0 343.7 720.2 339.9ZM705.6 325.0 710.3 324.1 711.0 333.0 706.6 334.3ZM706.9 318.1 710.0 315.8 710.0 322.7 708.3 323.2ZM595.0 179.0 600.0 173.0 609.0 174.0 615.0 172.0 623.0 171.0 630.0 176.0 632.0 183.0 628.0 190.0 619.0 195.0 608.0 196.0 600.0 193.0 597.0 187.0 601.0 183.0ZM147.5 412.2 150.9 410.4 148.2 407.9ZM123.7 253.2 127.1 251.6 130.5 253.2 127.1 254.9ZM115.6 256.8 118.6 255.1 121.7 256.8 118.6 258.4ZM107.4 260.8 110.8 259.2 114.2 260.8 110.8 262.4ZM101.3 264.8 103.7 263.2 106.1 264.8 103.7 266.4ZM95.9 267.1 97.9 265.5 99.9 267.1 97.9 268.6ZM85.3 269.3 88.0 267.7 90.8 269.3 88.0 270.8ZM76.1 271.5 78.9 269.9 81.6 271.5 78.9 273.0ZM70.0 271.5 72.1 269.9 74.1 271.5 72.1 273.0ZM55.1 270.4 57.5 268.8 59.8 270.4 57.5 271.9ZM42.8 267.1 45.6 265.5 48.3 267.1 45.6 268.6ZM1173.9 313.0 1180.7 307.3 1189.2 300.5 1196.0 294.1 1202.8 286.4 1207.9 278.5 1207.2 276.9 1201.1 284.3 1194.3 292.6 1187.5 299.6 1179.0 306.4 1173.2 312.1ZM410.9 383.4 416.0 384.5 417.7 390.2 413.3 393.2 411.6 389.5ZM623.3 376.9 631.8 375.7 630.5 378.8 624.7 379.6ZM591.7 419.0 600.6 420.4 597.8 426.8 593.8 426.4ZM858.8 434.5 862.9 434.8 861.6 435.9 859.5 435.9ZM147.9 407.5 151.6 410.4 148.5 412.6 147.2 409.7ZM139.7 402.8 142.1 403.9 140.4 404.2ZM134.6 400.6 136.3 400.6 135.6 401.7ZM468.7 681.2 480.6 681.8 478.9 687.3 470.4 685.6ZM652.2 205.3 655.6 206.1 654.2 210.4ZM685.5 331.2 689.6 330.3 688.6 332.5ZM810.9 497.4 811.9 499.8 810.9 499.5ZM366.0 478.7 369.1 479.7 367.7 481.4Z" fill="#f2efe9"/><path d="M365.6 290.5 379.0 287.2 390.8 292.2 394.2 297.3 384.1 295.6 374.0 295.6 367.3 295.6ZM382.4 297.3 389.1 299.0 390.8 310.7 385.8 315.8 382.4 307.4ZM394.2 300.6 404.3 304.0 407.6 312.4 400.9 314.1 395.9 307.4ZM255.0 173.0 262.0 169.0 270.0 171.0 277.0 176.0 272.0 182.0 262.0 183.0 257.0 179.0ZM283.6 209.0 292.0 204.0 300.0 206.0 304.6 212.0 297.0 218.0 288.0 216.0ZM336.0 257.0 340.0 256.5 347.0 270.0 345.0 274.0 340.0 268.0ZM311.0 228.0 320.0 226.0 324.0 229.0 314.0 231.0ZM772.9 322.3 774.9 315.8 774.9 309.7 778.3 305.4 782.0 299.1 785.8 299.1 791.6 301.5 788.2 304.4 791.9 308.8 796.7 307.3 801.7 305.4 806.8 307.3 811.9 311.1 818.7 320.4 819.1 322.7 813.6 325.4 805.1 324.5 798.4 321.8 793.3 320.4 786.5 321.3 781.4 324.1 776.6 324.1ZM796.7 304.9 798.4 304.4 803.4 299.1 808.5 295.6 810.9 296.6 806.8 301.5 802.1 304.9ZM838.5 303.5 845.9 299.1 851.0 296.6 857.8 297.6 857.8 304.9 852.0 308.8 851.0 314.4 856.8 318.1 857.5 325.0 861.2 325.9 861.2 333.8 860.9 341.2 852.7 343.3 848.3 340.8 844.2 337.3 845.9 328.6 848.7 327.2 843.9 321.3 839.1 315.8 839.1 308.8 836.8 306.4ZM876.5 299.1 885.0 299.1 886.7 306.4 881.6 311.1 876.5 308.8ZM929.2 299.1 939.4 299.1 946.2 300.5 936.0 301.5 929.2 302.5ZM1030.5 272.0 1036.3 267.6 1044.8 260.2 1049.8 250.3 1050.9 252.1 1046.4 264.8 1039.7 270.4 1032.9 273.7ZM785.8 479.0 791.6 476.6 793.9 479.0 793.3 482.1 790.5 486.5 785.8 484.8ZM776.9 489.2 778.3 489.6 781.0 496.7 783.4 506.3 781.7 507.0 778.0 499.5 776.6 493.3ZM793.3 510.4 795.0 510.8 797.3 519.1 797.7 526.8 795.6 526.1 794.3 518.4ZM780.3 221.6 784.8 220.2 789.9 214.7 788.2 212.5 781.4 213.2 779.0 217.4ZM795.6 214.7 799.4 213.2 801.1 203.9 796.7 201.7 795.0 207.5ZM439.8 530.6 442.5 531.7 444.6 534.2 441.8 533.1ZM294.3 322.3 296.4 322.7 297.1 325.4 294.7 325.0Z" fill="#aad3df"/><path d="M259.0 286.4 354.2 286.4 354.2 284.3 355.5 287.5 365.0 289.5 373.2 291.6 382.0 293.6 390.5 299.1 397.7 304.9 397.3 315.8 395.6 320.4 409.2 318.1 408.5 313.5 418.0 310.2 423.8 306.4 434.7 306.4 437.4 304.4 439.8 298.1 442.5 294.3 445.9 294.8 447.3 296.1 447.3 303.0 450.0 305.9M198.5 144.0 198.5 219.5 205.3 219.5 210.4 227.6 217.2 222.9 224.3 232.2 229.8 243.6 235.9 247.8 233.8 255.0M279.7 361.1 287.9 360.3 300.1 365.9 310.0 365.9 310.0 363.9 315.7 363.9 321.9 369.9 326.3 374.9 329.7 371.8 333.1 371.8 336.8 377.7 339.5 380.7 347.7 386.8M364.3 428.2 364.3 425.4 368.4 422.5 370.5 422.5 367.1 418.3 374.5 416.5 377.6 414.0M374.5 416.5 374.5 423.3 377.9 424.0M371.5 431.0 374.2 428.5 379.6 430.6M381.0 433.8 388.8 429.9 394.9 426.4M386.4 440.0 393.2 440.7M395.6 449.7 396.0 445.2M414.6 448.3 413.3 453.5M433.0 437.6 431.3 440.4 428.9 446.6 431.6 452.8 439.5 454.2 448.3 456.9 447.3 462.7 449.0 470.5 450.3 473.9M473.8 449.0 470.4 455.2 471.4 460.3 473.4 462.3M483.6 457.9 480.6 472.6M494.2 458.6 492.5 470.2M502.3 463.7 494.2 470.5 485.7 471.5 478.9 473.6 474.5 472.6 473.4 462.3 464.3 464.4 457.5 463.7 450.3 473.9 441.5 474.3 440.1 492.3 429.9 495.4 428.9 502.9 431.6 510.4 437.8 515.6 441.2 515.3 453.4 511.5 455.8 517.3 465.3 522.6 472.1 525.4 473.1 534.2 479.9 534.2 481.9 540.9 480.2 548.1 481.3 555.0 488.7 556.9 492.1 568.1 495.5 570.3 494.9 574.1 488.1 578.3 481.9 585.7 487.4 588.1 496.2 599.8M409.2 473.9 415.0 476.6 422.1 478.3 421.1 483.4 411.2 489.6 404.8 489.6M422.1 478.3 428.2 481.4 440.1 492.3M444.2 520.8 441.5 531.0 442.9 535.6 441.2 538.8 438.4 541.3M441.2 538.8 445.2 545.2 445.9 552.8 449.3 557.6 455.8 555.0 464.3 554.7 468.0 546.0 476.8 544.9 479.9 546.7M464.9 555.4 480.6 563.2 481.9 567.7 492.1 568.1M449.3 557.6 444.9 563.2 444.9 574.9 440.8 586.9 439.8 598.5 436.7 611.4 435.7 624.3 433.7 642.5 434.4 656.9 431.3 667.0 428.6 677.5 433.0 682.9 444.9 687.3M479.2 600.6 480.2 592.9 481.9 585.7M671.9 350.9 671.6 356.6 665.5 364.3 659.7 371.0 648.1 376.1 648.1 380.0 632.8 380.0M648.1 381.5 661.4 390.2 655.6 390.6 659.0 421.5 638.3 425.0 636.2 427.8 621.6 422.2M619.6 405.3 633.5 403.9 633.5 397.6 636.9 395.8 636.9 386.4 648.1 386.4 648.1 381.5M706.9 342.9 705.6 350.9 703.2 357.0 710.0 370.3 711.7 386.4 718.1 395.8 703.2 405.3 692.3 411.5 688.9 412.2 681.8 406.1 661.4 390.2M715.8 358.3 710.0 370.3M762.7 364.7 762.7 408.6 759.3 410.4 728.7 397.6 718.1 395.8M762.7 401.3 803.1 401.3M759.3 410.4 753.5 429.6 755.5 440.7 750.8 442.1 740.6 450.7 730.4 452.4 723.6 443.8 727.0 440.4 726.0 435.2 723.9 431.0 730.4 406.1 728.7 397.6M692.3 411.5 692.0 419.7 679.1 426.4 667.8 440.7 659.0 442.5 649.5 442.8 639.0 435.5 638.3 425.0M679.1 426.4 685.9 437.3 689.9 438.0 696.4 430.3 708.3 434.1 720.2 433.1 726.0 435.2M686.9 456.2 689.9 438.0M683.1 456.9 680.8 440.4M681.8 457.2 679.4 440.4M666.8 460.6 667.8 440.7M652.2 463.0 649.8 452.4 649.5 442.8M638.6 454.5 642.7 449.0 639.6 443.8M632.5 447.3 635.9 444.2 639.6 443.8M620.9 435.5 632.5 434.5 639.0 435.5M727.0 440.4 719.2 449.3 706.9 461.7M711.0 470.5 722.9 470.5 732.8 470.5 727.0 460.6 730.4 452.4M715.4 491.3 720.2 484.8 726.3 484.8 725.3 473.2 722.9 470.5M719.8 495.0 728.7 492.6 732.8 484.8 737.9 479.7 739.2 469.5 740.9 463.7 754.2 463.7 762.7 461.0 771.2 460.6 783.1 465.4 793.3 463.7M750.8 442.1 757.6 448.3 771.2 460.6M757.2 445.2 769.5 445.2 779.7 443.1 789.9 443.8 793.3 448.3M803.1 428.9 801.7 435.2 794.3 441.1 793.3 448.3 789.9 451.4 797.7 461.0 810.2 466.1 817.0 464.7 823.8 461.3 830.6 461.0 840.8 450.7 827.2 447.3 823.8 440.4M801.4 428.5 808.2 428.5 813.6 429.9 821.5 435.2M817.0 464.7 817.0 483.8M793.3 463.7 796.7 472.9 793.3 481.4 805.5 488.2 810.9 494.0M719.2 498.4 733.8 503.6 737.5 505.6 743.6 505.3 751.8 502.9 752.5 515.6 759.3 515.6 763.7 516.3 769.5 518.4 776.3 524.0 778.3 519.8 774.6 507.0 781.4 506.3 776.6 493.3 778.0 482.8 782.4 472.9 783.7 469.5 782.4 466.1M815.0 513.5 805.1 518.0 795.3 517.3 796.7 527.8 789.9 526.1 781.0 531.7 788.8 534.9 789.2 543.8 784.1 556.1 786.5 563.9 789.5 573.0M752.5 522.6 752.5 534.2 757.6 538.4 763.7 539.5 772.9 534.9 781.0 531.7M789.9 526.1 791.6 515.6 786.5 509.4 776.3 507.0M717.8 537.7 724.9 538.1 740.6 538.1 749.1 540.2 757.6 538.4M749.1 540.2 749.1 554.7 745.7 554.7 745.7 565.0 745.7 578.7 733.8 579.5M745.7 565.0 755.9 566.9 765.7 564.7 771.2 560.2 777.6 555.0 784.1 556.1M763.7 539.5 772.9 551.0 777.6 555.0M793.3 481.4 781.4 481.4 778.0 482.8M781.4 506.3 789.9 510.4 795.3 517.3M671.6 314.0 688.6 318.6M686.2 275.3 692.0 281.2 698.4 283.8 705.6 286.4 703.5 293.6 698.1 300.5 701.5 302.0 700.1 305.9 703.2 312.1M692.0 273.7 697.4 274.8 698.4 280.7 698.4 283.8M701.5 263.1 700.5 269.3 697.4 274.8M726.0 259.7 727.3 267.6 728.7 275.9 718.8 279.6 724.6 287.5 721.9 294.1 710.3 294.1 703.5 293.6M707.3 253.8 711.3 254.4M745.3 257.4 757.6 259.1 757.9 267.6 759.3 277.5 754.5 285.9M728.7 275.9 733.8 279.6 741.6 283.8 754.5 285.9M724.6 287.5 728.7 286.4 735.5 288.0 741.6 283.8M735.5 291.6 745.7 290.5 753.1 289.5 755.5 292.1M710.3 294.1 713.4 297.6 720.2 298.6 724.3 299.1 733.8 299.1 735.5 291.6M698.1 300.5 701.5 302.0 708.3 302.0 713.4 297.6M733.8 299.1 741.6 302.0 746.7 301.0 755.5 292.1M755.5 292.1 768.1 290.5 773.5 304.0 778.3 305.4M754.8 310.2 762.7 312.6 772.5 311.1 774.9 312.6M746.7 301.0 750.8 306.4 754.8 310.2 755.9 315.8 754.2 319.1 749.1 320.4 744.0 318.1 740.6 318.1M730.4 304.9 735.5 305.4 743.6 305.4 742.3 311.1 740.6 318.1M745.7 330.8 749.1 325.9 755.9 323.6 766.1 321.8 768.1 326.8M772.9 320.4 767.4 320.4 766.1 321.8M757.9 273.1 771.2 272.6 781.4 274.2 785.8 269.8 794.6 274.2 798.4 279.1 807.9 281.7 813.6 283.3 813.0 292.6 807.5 296.1M757.6 259.1 762.7 257.9 768.1 249.1 773.5 246.0 785.8 260.2 785.8 269.8M772.9 224.9 771.2 237.9 773.5 246.0M749.1 246.6 768.1 249.1M760.3 235.4 771.2 237.9M745.7 253.8 755.2 253.8 754.2 257.4M772.9 218.1 778.6 211.1 784.8 200.9 778.0 188.6 779.7 169.7 776.3 149.8 775.9 141.1M759.3 178.1 758.2 167.9 747.7 148.8M715.8 228.9 720.2 218.1 719.2 207.5 725.3 188.6 731.1 174.8 738.9 154.5 747.7 148.8 762.7 153.5 775.9 141.1M776.3 149.8 783.1 142.0M813.3 314.0 823.8 318.1 834.0 321.8 842.9 321.3M818.7 322.7 825.5 324.5 830.0 330.8 830.0 341.6M800.7 346.7 806.8 343.3 821.5 342.0 830.0 341.6 834.0 350.9 832.3 355.0 840.2 363.1 842.5 371.0M821.5 342.0 817.0 353.4 809.6 357.5 810.9 362.3 829.6 374.2 835.7 374.6 840.2 371.0M803.4 373.8 810.9 362.3M798.7 359.1 802.1 361.9 809.6 357.5M823.8 420.4 839.1 419.4 854.4 412.2 866.7 401.3 868.0 392.1M853.1 392.8 854.4 393.9 866.7 401.3M850.3 391.0 853.1 392.8M861.2 341.2 872.4 338.2 883.3 342.5 885.7 348.4 885.0 365.5 892.8 373.0 886.7 389.5M885.0 371.8 903.7 371.4 913.2 365.1 917.3 357.0 920.7 351.7 930.9 342.5M885.7 348.4 896.9 341.6 908.1 341.6 920.7 338.2 930.9 340.8M909.5 395.1 918.3 387.6 924.1 378.8 930.9 367.5 933.3 361.1 942.1 348.8M942.1 348.8 946.2 355.0 944.5 361.1 949.9 369.9 953.0 370.3 963.2 376.9 977.1 379.2 980.2 378.8 990.4 380.0 1004.0 373.4 1008.4 378.0M977.1 384.5 979.2 392.8 980.2 401.3 990.4 399.5 992.1 392.1 983.6 389.1M1008.4 378.0 998.9 388.3 994.8 395.8 991.4 405.0M1012.5 380.7 1012.5 393.9 1021.0 403.2 1017.9 407.2 1010.1 414.0 1012.5 422.9 1014.2 433.4 1013.5 442.1M1021.0 403.2 1031.2 398.4 1040.3 401.3 1044.8 403.2M1024.4 399.9 1032.9 406.8 1038.0 417.6 1043.1 428.2 1038.0 437.6 1032.9 442.1M1017.9 407.2 1021.0 417.6 1032.2 417.6 1036.3 428.9 1026.1 436.9M927.5 331.7 932.6 327.2 950.3 319.5 951.3 306.4 958.1 304.0 959.8 295.6 968.3 296.6 974.4 285.9M838.1 301.5 844.2 289.0 850.3 272.6 866.3 278.0 881.6 276.9 886.7 270.4 883.3 259.1 900.3 255.6 912.2 250.9 927.5 262.0 937.7 257.9 942.8 267.6 951.3 275.9 963.2 276.9 974.4 285.9M974.4 285.9 990.4 277.5 1010.8 270.4 1024.4 273.1 1044.8 283.8 1065.1 281.2 1074.3 282.2M974.4 285.9 985.3 304.0 1004.0 317.2 1034.6 322.7 1054.9 315.8 1071.9 301.5 1083.8 297.6 1074.3 282.2M1074.3 282.2 1085.5 263.7 1105.9 265.9 1112.7 283.8 1122.9 292.6 1136.5 290.0 1131.4 306.4 1122.9 315.8 1121.6 318.6M1121.6 318.6 1112.7 320.4 1105.9 327.2 1099.8 330.3M1106.3 339.5 1109.3 336.9 1114.1 335.6M857.8 320.4 868.0 323.6 876.5 304.0 885.0 309.2 895.2 313.0 902.0 318.6 910.5 326.3 919.0 319.5 930.9 314.9 950.3 319.5M868.0 323.6 885.0 324.1 896.9 336.0 903.7 340.8M910.5 326.3 919.0 329.4 927.5 331.7M1156.9 486.8 1156.9 509.1M1050.2 471.5 1058.3 472.9 1066.8 473.2 1070.2 466.1 1077.0 463.7" fill="none" stroke="#a9a3a6" stroke-width="0.7" stroke-opacity="0.75"/></g></defs>
<use href="#w" x="-1223.5"/><use href="#w"/><use href="#w" x="1223.5"/>
<rect x="0" y="0" width="1450" height="1" fill="#000" fill-opacity="0.13"/>
</svg>
<div class="sh" style="left:499.8px;top:167.0px"></div><div class="sh" style="left:601.5px;top:167.7px"></div><div class="sh" style="left:738.6px;top:125.6px"></div><div class="sh" style="left:965.3px;top:244.9px"></div><div class="sh" style="left:313.6px;top:372.5px"></div><div class="sh" style="left:863.6px;top:364.3px"></div><div class="sh" style="left:953.2px;top:426.6px"></div><div class="sh" style="left:1176.7px;top:580.8px"></div><svg class="pin" style="left:726.4px;top:102.0px" width="30" height="48" viewBox="0 0 25 40"><defs><linearGradient id="pg2" x1="0" y1="0" x2="0" y2="1"><stop offset="0" stop-color="#3b8fd8"/><stop offset="1" stop-color="#2678c9"/></linearGradient></defs><path d="M12.5 0.9C5.9 0.9 0.7 5.9 0.7 12.4c0 3.3 1.3 5.8 2.8 8.5L12.5 39.2 21.5 20.9c1.5-2.7 2.8-5.2 2.8-8.5C24.3 5.9 19.1 0.9 12.5 0.9z" fill="url(#pg2)" stroke="#fff" stroke-width="2.2" stroke-opacity="0.7"/><path d="M12.5 0.9C5.9 0.9 0.7 5.9 0.7 12.4c0 3.3 1.3 5.8 2.8 8.5L12.5 39.2 21.5 20.9c1.5-2.7 2.8-5.2 2.8-8.5C24.3 5.9 19.1 0.9 12.5 0.9z" fill="url(#pg2)" stroke="#1d4f86" stroke-width="1.1"/><path d="M12.5 2.6C7 2.6 2.4 7 2.4 12.4c0 2.9 1.1 5.1 2.5 7.7L12.5 35.5" fill="none" stroke="#5aa6e6" stroke-width="0.8" opacity="0.6"/><circle cx="12.5" cy="13.2" r="4.6" fill="#fff" stroke="#1d4f86" stroke-width="1"/></svg>
<div class="cl" style="left:752.0px;top:153.4px;background:rgba(181,226,140,0.6)"><div style="background:rgba(110,204,57,0.6)">6</div></div>
<svg class="pin" style="left:487.6px;top:143.4px" width="30" height="48" viewBox="0 0 25 40"><defs><linearGradient id="pg0" x1="0" y1="0" x2="0" y2="1"><stop offset="0" stop-color="#3b8fd8"/><stop offset="1" stop-color="#2678c9"/></linearGradient></defs><path d="M12.5 0.9C5.9 0.9 0.7 5.9 0.7 12.4c0 3.3 1.3 5.8 2.8 8.5L12.5 39.2 21.5 20.9c1.5-2.7 2.8-5.2 2.8-8.5C24.3 5.9 19.1 0.9 12.5 0.9z" fill="url(#pg0)" stroke="#fff" stroke-width="2.2" stroke-opacity="0.7"/><path d="M12.5 0.9C5.9 0.9 0.7 5.9 0.7 12.4c0 3.3 1.3 5.8 2.8 8.5L12.5 39.2 21.5 20.9c1.5-2.7 2.8-5.2 2.8-8.5C24.3 5.9 19.1 0.9 12.5 0.9z" fill="url(#pg0)" stroke="#1d4f86" stroke-width="1.1"/><path d="M12.5 2.6C7 2.6 2.4 7 2.4 12.4c0 2.9 1.1 5.1 2.5 7.7L12.5 35.5" fill="none" stroke="#5aa6e6" stroke-width="0.8" opacity="0.6"/><circle cx="12.5" cy="13.2" r="4.6" fill="#fff" stroke="#1d4f86" stroke-width="1"/></svg>
<svg class="pin" style="left:589.3px;top:144.1px" width="30" height="48" viewBox="0 0 25 40"><defs><linearGradient id="pg1" x1="0" y1="0" x2="0" y2="1"><stop offset="0" stop-color="#3b8fd8"/><stop offset="1" stop-color="#2678c9"/></linearGradient></defs><path d="M12.5 0.9C5.9 0.9 0.7 5.9 0.7 12.4c0 3.3 1.3 5.8 2.8 8.5L12.5 39.2 21.5 20.9c1.5-2.7 2.8-5.2 2.8-8.5C24.3 5.9 19.1 0.9 12.5 0.9z" fill="url(#pg1)" stroke="#fff" stroke-width="2.2" stroke-opacity="0.7"/><path d="M12.5 0.9C5.9 0.9 0.7 5.9 0.7 12.4c0 3.3 1.3 5.8 2.8 8.5L12.5 39.2 21.5 20.9c1.5-2.7 2.8-5.2 2.8-8.5C24.3 5.9 19.1 0.9 12.5 0.9z" fill="url(#pg1)" stroke="#1d4f86" stroke-width="1.1"/><path d="M12.5 2.6C7 2.6 2.4 7 2.4 12.4c0 2.9 1.1 5.1 2.5 7.7L12.5 35.5" fill="none" stroke="#5aa6e6" stroke-width="0.8" opacity="0.6"/><circle cx="12.5" cy="13.2" r="4.6" fill="#fff" stroke="#1d4f86" stroke-width="1"/></svg>
<div class="cl" style="left:719.1px;top:173.6px;background:rgba(241,211,87,0.6)"><div style="background:rgba(240,194,12,0.6)">13</div></div>
<div class="cl" style="left:747.5px;top:209.4px;background:rgba(253,156,115,0.6)"><div style="background:rgba(241,128,23,0.6)">189</div></div>
<div class="cl" style="left:869.6px;top:217.8px;background:rgba(181,226,140,0.6)"><div style="background:rgba(110,204,57,0.6)">2</div></div>
<div class="cl" style="left:648.8px;top:221.1px;background:rgba(241,211,87,0.6)"><div style="background:rgba(240,194,12,0.6)">53</div></div>
<div class="cl" style="left:836.0px;top:229.7px;background:rgba(241,211,87,0.6)"><div style="background:rgba(240,194,12,0.6)">16</div></div>
<svg class="pin" style="left:953.1px;top:221.3px" width="30" height="48" viewBox="0 0 25 40"><defs><linearGradient id="pg3" x1="0" y1="0" x2="0" y2="1"><stop offset="0" stop-color="#3b8fd8"/><stop offset="1" stop-color="#2678c9"/></linearGradient></defs><path d="M12.5 0.9C5.9 0.9 0.7 5.9 0.7 12.4c0 3.3 1.3 5.8 2.8 8.5L12.5 39.2 21.5 20.9c1.5-2.7 2.8-5.2 2.8-8.5C24.3 5.9 19.1 0.9 12.5 0.9z" fill="url(#pg3)" stroke="#fff" stroke-width="2.2" stroke-opacity="0.7"/><path d="M12.5 0.9C5.9 0.9 0.7 5.9 0.7 12.4c0 3.3 1.3 5.8 2.8 8.5L12.5 39.2 21.5 20.9c1.5-2.7 2.8-5.2 2.8-8.5C24.3 5.9 19.1 0.9 12.5 0.9z" fill="url(#pg3)" stroke="#1d4f86" stroke-width="1.1"/><path d="M12.5 2.6C7 2.6 2.4 7 2.4 12.4c0 2.9 1.1 5.1 2.5 7.7L12.5 35.5" fill="none" stroke="#5aa6e6" stroke-width="0.8" opacity="0.6"/><circle cx="12.5" cy="13.2" r="4.6" fill="#fff" stroke="#1d4f86" stroke-width="1"/></svg>
<div class="cl" style="left:1009.8px;top:258.3px;background:rgba(181,226,140,0.6)"><div style="background:rgba(110,204,57,0.6)">4</div></div>
<div class="cl" style="left:682.4px;top:261.0px;background:rgba(253,156,115,0.6)"><div style="background:rgba(241,128,23,0.6)">8000</div></div>
<div class="cl" style="left:258.1px;top:262.0px;background:rgba(181,226,140,0.6)"><div style="background:rgba(110,204,57,0.6)">6</div></div>
<div class="cl" style="left:1088.8px;top:274.2px;background:rgba(181,226,140,0.6)"><div style="background:rgba(110,204,57,0.6)">2</div></div>
<div class="cl" style="left:804.8px;top:297.7px;background:rgba(241,211,87,0.6)"><div style="background:rgba(240,194,12,0.6)">19</div></div>
<div class="cl" style="left:643.9px;top:299.1px;background:rgba(241,211,87,0.6)"><div style="background:rgba(240,194,12,0.6)">90</div></div>
<div class="cl" style="left:288.7px;top:301.3px;background:rgba(181,226,140,0.6)"><div style="background:rgba(110,204,57,0.6)">5</div></div>
<div class="cl" style="left:741.0px;top:302.2px;background:rgba(253,156,115,0.6)"><div style="background:rgba(241,128,23,0.6)">499</div></div>
<div class="cl" style="left:884.8px;top:305.9px;background:rgba(181,226,140,0.6)"><div style="background:rgba(110,204,57,0.6)">3</div></div>
<div class="cl" style="left:363.7px;top:308.7px;background:rgba(253,156,115,0.6)"><div style="background:rgba(241,128,23,0.6)">159</div></div>
<div class="cl" style="left:1122.2px;top:321.5px;background:rgba(241,211,87,0.6)"><div style="background:rgba(240,194,12,0.6)">55</div></div>
<div class="cl" style="left:261.3px;top:329.7px;background:rgba(241,211,87,0.6)"><div style="background:rgba(240,194,12,0.6)">22</div></div>
<div class="cl" style="left:1058.3px;top:338.4px;background:rgba(241,211,87,0.6)"><div style="background:rgba(240,194,12,0.6)">67</div></div>
<div class="cl" style="left:614.0px;top:345.7px;background:rgba(181,226,140,0.6)"><div style="background:rgba(110,204,57,0.6)">8</div></div>
<div class="cl" style="left:1013.6px;top:350.5px;background:rgba(181,226,140,0.6)"><div style="background:rgba(110,204,57,0.6)">4</div></div>
<div class="cl" style="left:373.5px;top:355.7px;background:rgba(181,226,140,0.6)"><div style="background:rgba(110,204,57,0.6)">3</div></div>
<svg class="pin" style="left:851.4px;top:340.7px" width="30" height="48" viewBox="0 0 25 40"><defs><linearGradient id="pg5" x1="0" y1="0" x2="0" y2="1"><stop offset="0" stop-color="#3b8fd8"/><stop offset="1" stop-color="#2678c9"/></linearGradient></defs><path d="M12.5 0.9C5.9 0.9 0.7 5.9 0.7 12.4c0 3.3 1.3 5.8 2.8 8.5L12.5 39.2 21.5 20.9c1.5-2.7 2.8-5.2 2.8-8.5C24.3 5.9 19.1 0.9 12.5 0.9z" fill="url(#pg5)" stroke="#fff" stroke-width="2.2" stroke-opacity="0.7"/><path d="M12.5 0.9C5.9 0.9 0.7 5.9 0.7 12.4c0 3.3 1.3 5.8 2.8 8.5L12.5 39.2 21.5 20.9c1.5-2.7 2.8-5.2 2.8-8.5C24.3 5.9 19.1 0.9 12.5 0.9z" fill="url(#pg5)" stroke="#1d4f86" stroke-width="1.1"/><path d="M12.5 2.6C7 2.6 2.4 7 2.4 12.4c0 2.9 1.1 5.1 2.5 7.7L12.5 35.5" fill="none" stroke="#5aa6e6" stroke-width="0.8" opacity="0.6"/><circle cx="12.5" cy="13.2" r="4.6" fill="#fff" stroke="#1d4f86" stroke-width="1"/></svg>
<div class="cl" style="left:950.1px;top:370.3px;background:rgba(181,226,140,0.6)"><div style="background:rgba(110,204,57,0.6)">2</div></div>
<svg class="pin" style="left:301.4px;top:348.9px" width="30" height="48" viewBox="0 0 25 40"><defs><linearGradient id="pg4" x1="0" y1="0" x2="0" y2="1"><stop offset="0" stop-color="#3b8fd8"/><stop offset="1" stop-color="#2678c9"/></linearGradient></defs><path d="M12.5 0.9C5.9 0.9 0.7 5.9 0.7 12.4c0 3.3 1.3 5.8 2.8 8.5L12.5 39.2 21.5 20.9c1.5-2.7 2.8-5.2 2.8-8.5C24.3 5.9 19.1 0.9 12.5 0.9z" fill="url(#pg4)" stroke="#fff" stroke-width="2.2" stroke-opacity="0.7"/><path d="M12.5 0.9C5.9 0.9 0.7 5.9 0.7 12.4c0 3.3 1.3 5.8 2.8 8.5L12.5 39.2 21.5 20.9c1.5-2.7 2.8-5.2 2.8-8.5C24.3 5.9 19.1 0.9 12.5 0.9z" fill="url(#pg4)" stroke="#1d4f86" stroke-width="1.1"/><path d="M12.5 2.6C7 2.6 2.4 7 2.4 12.4c0 2.9 1.1 5.1 2.5 7.7L12.5 35.5" fill="none" stroke="#5aa6e6" stroke-width="0.8" opacity="0.6"/><circle cx="12.5" cy="13.2" r="4.6" fill="#fff" stroke="#1d4f86" stroke-width="1"/></svg>
<div class="cl" style="left:904.2px;top:390.0px;background:rgba(181,226,140,0.6)"><div style="background:rgba(110,204,57,0.6)">2</div></div>
<div class="cl" style="left:589.7px;top:404.0px;background:rgba(181,226,140,0.6)"><div style="background:rgba(110,204,57,0.6)">6</div></div>
<div class="cl" style="left:630.8px;top:405.9px;background:rgba(181,226,140,0.6)"><div style="background:rgba(110,204,57,0.6)">7</div></div>
<div class="cl" style="left:357.4px;top:409.0px;background:rgba(241,211,87,0.6)"><div style="background:rgba(240,194,12,0.6)">33</div></div>
<div class="cl" style="left:1020.7px;top:409.1px;background:rgba(181,226,140,0.6)"><div style="background:rgba(110,204,57,0.6)">2</div></div>
<div class="cl" style="left:1068.6px;top:409.8px;background:rgba(181,226,140,0.6)"><div style="background:rgba(110,204,57,0.6)">3</div></div>
<svg class="pin" style="left:941.0px;top:403.0px" width="30" height="48" viewBox="0 0 25 40"><defs><linearGradient id="pg6" x1="0" y1="0" x2="0" y2="1"><stop offset="0" stop-color="#3b8fd8"/><stop offset="1" stop-color="#2678c9"/></linearGradient></defs><path d="M12.5 0.9C5.9 0.9 0.7 5.9 0.7 12.4c0 3.3 1.3 5.8 2.8 8.5L12.5 39.2 21.5 20.9c1.5-2.7 2.8-5.2 2.8-8.5C24.3 5.9 19.1 0.9 12.5 0.9z" fill="url(#pg6)" stroke="#fff" stroke-width="2.2" stroke-opacity="0.7"/><path d="M12.5 0.9C5.9 0.9 0.7 5.9 0.7 12.4c0 3.3 1.3 5.8 2.8 8.5L12.5 39.2 21.5 20.9c1.5-2.7 2.8-5.2 2.8-8.5C24.3 5.9 19.1 0.9 12.5 0.9z" fill="url(#pg6)" stroke="#1d4f86" stroke-width="1.1"/><path d="M12.5 2.6C7 2.6 2.4 7 2.4 12.4c0 2.9 1.1 5.1 2.5 7.7L12.5 35.5" fill="none" stroke="#5aa6e6" stroke-width="0.8" opacity="0.6"/><circle cx="12.5" cy="13.2" r="4.6" fill="#fff" stroke="#1d4f86" stroke-width="1"/></svg>
<div class="cl" style="left:654.6px;top:435.2px;background:rgba(241,211,87,0.6)"><div style="background:rgba(240,194,12,0.6)">42</div></div>
<div class="cl" style="left:400.4px;top:442.5px;background:rgba(181,226,140,0.6)"><div style="background:rgba(110,204,57,0.6)">5</div></div>
<div class="cl" style="left:772.3px;top:457.7px;background:rgba(241,211,87,0.6)"><div style="background:rgba(240,194,12,0.6)">25</div></div>
<div class="cl" style="left:714.7px;top:467.3px;background:rgba(181,226,140,0.6)"><div style="background:rgba(110,204,57,0.6)">3</div></div>
<div class="cl" style="left:1011.1px;top:469.2px;background:rgba(181,226,140,0.6)"><div style="background:rgba(110,204,57,0.6)">3</div></div>
<div class="cl" style="left:769.7px;top:507.9px;background:rgba(181,226,140,0.6)"><div style="background:rgba(110,204,57,0.6)">5</div></div>
<div class="cl" style="left:420.6px;top:508.2px;background:rgba(181,226,140,0.6)"><div style="background:rgba(110,204,57,0.6)">9</div></div>
<div class="cl" style="left:720.7px;top:545.8px;background:rgba(181,226,140,0.6)"><div style="background:rgba(110,204,57,0.6)">5</div></div>
<div class="cl" style="left:466.3px;top:558.1px;background:rgba(241,211,87,0.6)"><div style="background:rgba(240,194,12,0.6)">26</div></div>
<div class="cl" style="left:755.3px;top:558.9px;background:rgba(181,226,140,0.6)"><div style="background:rgba(110,204,57,0.6)">4</div></div>
<div class="cl" style="left:426.4px;top:561.8px;background:rgba(181,226,140,0.6)"><div style="background:rgba(110,204,57,0.6)">2</div></div>
<svg class="pin" style="left:1164.5px;top:557.2px" width="30" height="48" viewBox="0 0 25 40"><defs><linearGradient id="pg7" x1="0" y1="0" x2="0" y2="1"><stop offset="0" stop-color="#3b8fd8"/><stop offset="1" stop-color="#2678c9"/></linearGradient></defs><path d="M12.5 0.9C5.9 0.9 0.7 5.9 0.7 12.4c0 3.3 1.3 5.8 2.8 8.5L12.5 39.2 21.5 20.9c1.5-2.7 2.8-5.2 2.8-8.5C24.3 5.9 19.1 0.9 12.5 0.9z" fill="url(#pg7)" stroke="#fff" stroke-width="2.2" stroke-opacity="0.7"/><path d="M12.5 0.9C5.9 0.9 0.7 5.9 0.7 12.4c0 3.3 1.3 5.8 2.8 8.5L12.5 39.2 21.5 20.9c1.5-2.7 2.8-5.2 2.8-8.5C24.3 5.9 19.1 0.9 12.5 0.9z" fill="url(#pg7)" stroke="#1d4f86" stroke-width="1.1"/><path d="M12.5 2.6C7 2.6 2.4 7 2.4 12.4c0 2.9 1.1 5.1 2.5 7.7L12.5 35.5" fill="none" stroke="#5aa6e6" stroke-width="0.8" opacity="0.6"/><circle cx="12.5" cy="13.2" r="4.6" fill="#fff" stroke="#1d4f86" stroke-width="1"/></svg></div>

</body></html>
